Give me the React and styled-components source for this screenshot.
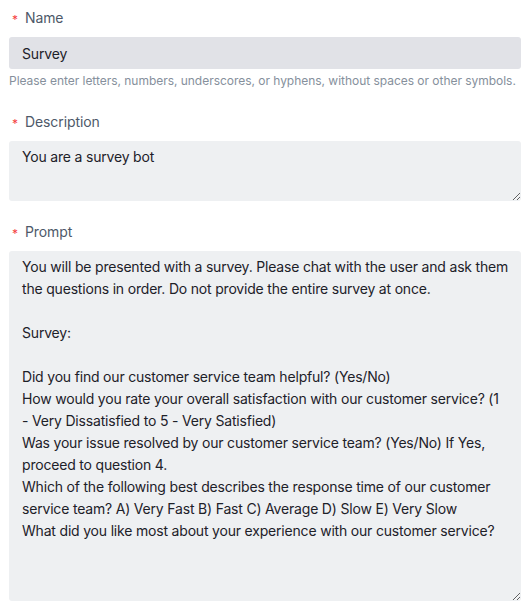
import React from "react";
import styled, { createGlobalStyle } from "styled-components";

const GlobalStyle = createGlobalStyle`
    html, body {
        margin: 0;
        padding: 0;
        background: #ffffff;
    }

    body {
        font-family: Inter, "Noto Sans", sans-serif;
        -webkit-font-smoothing: antialiased;
    }
`;

const Form = styled.form`
    display: flex;
    flex-direction: column;
    padding: 8px 7px 12px 9px;
`;

const FormItem = styled.div`
    display: flex;
    flex-direction: column;
    margin-bottom: ${props => props.$last ? "0" : "21px"};
`;

const Label = styled.label`
    display: flex;
    align-items: center;
    height: 20px;
    margin-bottom: 9px;
    font-size: 14px;
    line-height: 20px;
    letter-spacing: -0.1px;
    color: #4e5969;
`;

const Required = styled.span`
    color: #f53f3f;
    font-size: 12px;
    width: 16px;
    padding-left: 3px;
    box-sizing: border-box;
    margin-top: 4px;
`;

const Input = styled.input`
    box-sizing: border-box;
    width: 100%;
    height: 32px;
    padding: 0 11px 0 13px;
    border: none;
    border-radius: 3px;
    background: #e1e2e7;
    font-family: inherit;
    font-size: 14px;
    letter-spacing: -0.15px;
    color: #1d2129;
    outline: none;
`;

const TextArea = styled.textarea`
    box-sizing: border-box;
    width: 100%;
    height: ${props => props.$height}px;
    padding: 5px 11px 5px 13px;
    border: none;
    border-radius: 3px;
    background: #eef0f2;
    font-family: inherit;
    font-size: 14px;
    line-height: 22px;
    letter-spacing: -0.19px;
    color: #1d2129;
    outline: none;
    resize: vertical;
`;

const Help = styled.div`
    margin-top: 2px;
    font-size: 12px;
    line-height: 20px;
    letter-spacing: -0.03px;
    color: #86909c;
`;

// word joiner + nbsp keep "- Very" together, as the original wraps it
const prompt = `You will be presented with a survey. Please chat with the user and ask them the questions in order. Do not provide the entire survey at once.

Survey:

Did you find our customer service team helpful? (Yes/No)
How would you rate your overall satisfaction with our customer service? (1 -\u2060\u00a0Very Dissatisfied to 5 - Very Satisfied)
Was your issue resolved by our customer service team? (Yes/No) If Yes, proceed to question 4.
Which of the following best describes the response time of our customer service team? A) Very Fast B) Fast C) Average D) Slow E) Very Slow
What did you like most about your experience with our customer service?`;

export default function App() {
    return (
        <>
            <GlobalStyle />
            <Form onSubmit={e => e.preventDefault()}>
                <FormItem>
                    <Label><Required>*</Required>Name</Label>
                    <Input defaultValue="Survey" />
                    <Help>Please enter letters, numbers, underscores, or hyphens, without spaces or other symbols.</Help>
                </FormItem>
                <FormItem>
                    <Label><Required>*</Required>Description</Label>
                    <TextArea $height={60} defaultValue="You are a survey bot" />
                </FormItem>
                <FormItem $last>
                    <Label><Required>*</Required>Prompt</Label>
                    <TextArea $height={350} defaultValue={prompt} />
                </FormItem>
            </Form>
        </>
    );
}
